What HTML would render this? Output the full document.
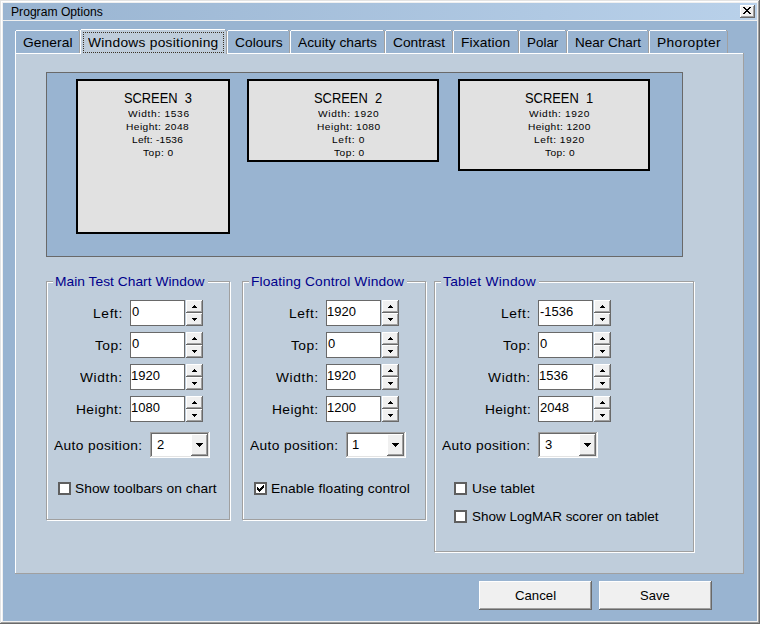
<!DOCTYPE html>
<html lang="en"><head><meta charset="utf-8"><title>Program Options</title>
<style>
html,body{margin:0;padding:0;}
body{width:760px;height:624px;overflow:hidden;position:relative;background:#99B4D1;font-family:"Liberation Sans",sans-serif;}
#w{position:absolute;left:0;top:0;width:760px;height:624px;overflow:hidden;}
#w div,#w svg,#w span{position:absolute;box-sizing:content-box;}
#w svg{display:block;fill:#000;}
.t{white-space:pre;line-height:20px;height:20px;transform-origin:0 0;}
</style></head>
<body><div id="w">
<div class="window-frame" style="left:0;top:0;width:0;height:0">
<div style="left:0px;top:0px;width:760px;height:624px;background:#696969;"></div>
<div style="left:0px;top:0px;width:759px;height:623px;background:#E3E3E3;"></div>
<div style="left:1px;top:1px;width:758px;height:622px;background:#A0A0A0;"></div>
<div style="left:1px;top:1px;width:757px;height:621px;background:#FFFFFF;"></div>
<div style="left:2px;top:2px;width:756px;height:620px;background:#F0F0F0;"></div>
<div style="left:3px;top:3px;width:754px;height:618px;background:#99B4D1;"></div>
</div>
<div class="titlebar" style="left:0;top:0;width:0;height:0">
<div style="left:3px;top:3px;width:754px;height:17px;background:linear-gradient(to right,#99B4D1,#B9D1EA);"></div>
<div style="left:3px;top:20px;width:754px;height:1px;background:#F0F0F0;"></div>
<div style="left:740px;top:5px;width:15px;height:13px;background:#696969;"></div><div style="left:740px;top:5px;width:14px;height:12px;background:#FFFFFF;"></div><div style="left:741px;top:6px;width:13px;height:11px;background:#A0A0A0;"></div><div style="left:741px;top:6px;width:12px;height:10px;background:#F0F0F0;"></div><svg style="left:743px;top:7px" width="8" height="7" viewBox="0 0 8 7" shape-rendering="crispEdges"><rect x="0" y="0" width="2" height="1"/><rect x="6" y="0" width="2" height="1"/><rect x="1" y="1" width="2" height="1"/><rect x="5" y="1" width="2" height="1"/><rect x="2" y="2" width="2" height="1"/><rect x="4" y="2" width="2" height="1"/><rect x="3" y="3" width="2" height="1"/><rect x="3" y="3" width="2" height="1"/><rect x="4" y="4" width="2" height="1"/><rect x="2" y="4" width="2" height="1"/><rect x="5" y="5" width="2" height="1"/><rect x="1" y="5" width="2" height="1"/><rect x="6" y="6" width="2" height="1"/><rect x="0" y="6" width="2" height="1"/></svg>
</div>
<div class="tabpage" style="left:0;top:0;width:0;height:0">
<div style="left:15px;top:53px;width:729px;height:521px;background:#A0A0A0;"></div>
<div style="left:15px;top:53px;width:728px;height:520px;background:#FFFFFF;"></div>
<div style="left:16px;top:54px;width:727px;height:519px;background:#BFCDDB;"></div>
</div>
<div class="tabstrip" style="left:0;top:0;width:0;height:0">
<div style="left:15px;top:31px;width:1px;height:22px;background:#FFFFFF;"></div>
<div style="left:16px;top:30px;width:62px;height:1px;background:#FFFFFF;"></div>
<div style="left:78px;top:30px;width:1px;height:1px;background:#A0A0A0;"></div>
<div style="left:79px;top:31px;width:1px;height:22px;background:#A0A0A0;"></div>
<div style="left:227px;top:31px;width:1px;height:22px;background:#FFFFFF;"></div>
<div style="left:228px;top:30px;width:60px;height:1px;background:#FFFFFF;"></div>
<div style="left:288px;top:30px;width:1px;height:1px;background:#A0A0A0;"></div>
<div style="left:289px;top:31px;width:1px;height:22px;background:#A0A0A0;"></div>
<div style="left:290px;top:31px;width:1px;height:22px;background:#FFFFFF;"></div>
<div style="left:291px;top:30px;width:92px;height:1px;background:#FFFFFF;"></div>
<div style="left:383px;top:30px;width:1px;height:1px;background:#A0A0A0;"></div>
<div style="left:384px;top:31px;width:1px;height:22px;background:#A0A0A0;"></div>
<div style="left:385px;top:31px;width:1px;height:22px;background:#FFFFFF;"></div>
<div style="left:386px;top:30px;width:65px;height:1px;background:#FFFFFF;"></div>
<div style="left:451px;top:30px;width:1px;height:1px;background:#A0A0A0;"></div>
<div style="left:452px;top:31px;width:1px;height:22px;background:#A0A0A0;"></div>
<div style="left:453px;top:31px;width:1px;height:22px;background:#FFFFFF;"></div>
<div style="left:454px;top:30px;width:63px;height:1px;background:#FFFFFF;"></div>
<div style="left:517px;top:30px;width:1px;height:1px;background:#A0A0A0;"></div>
<div style="left:518px;top:31px;width:1px;height:22px;background:#A0A0A0;"></div>
<div style="left:519px;top:31px;width:1px;height:22px;background:#FFFFFF;"></div>
<div style="left:520px;top:30px;width:45px;height:1px;background:#FFFFFF;"></div>
<div style="left:565px;top:30px;width:1px;height:1px;background:#A0A0A0;"></div>
<div style="left:566px;top:31px;width:1px;height:22px;background:#A0A0A0;"></div>
<div style="left:567px;top:31px;width:1px;height:22px;background:#FFFFFF;"></div>
<div style="left:568px;top:30px;width:79px;height:1px;background:#FFFFFF;"></div>
<div style="left:647px;top:30px;width:1px;height:1px;background:#A0A0A0;"></div>
<div style="left:648px;top:31px;width:1px;height:22px;background:#A0A0A0;"></div>
<div style="left:649px;top:31px;width:1px;height:22px;background:#FFFFFF;"></div>
<div style="left:650px;top:30px;width:76px;height:1px;background:#FFFFFF;"></div>
<div style="left:726px;top:30px;width:1px;height:1px;background:#A0A0A0;"></div>
<div style="left:727px;top:31px;width:1px;height:22px;background:#A0A0A0;"></div>
<div style="left:80px;top:30px;width:1px;height:24px;background:#FFFFFF;"></div>
<div style="left:81px;top:29px;width:144px;height:1px;background:#FFFFFF;"></div>
<div style="left:81px;top:30px;width:145px;height:24px;background:#BFCDDB;"></div>
<div style="left:226px;top:31px;width:1px;height:23px;background:#A0A0A0;"></div>
<div style="left:225px;top:30px;width:1px;height:1px;background:#A0A0A0;"></div>
<div style="left:83px;top:32px;width:141px;height:21px;background:repeating-linear-gradient(to right,#3A3226 0 1px,transparent 1px 2px) 0 0/100% 1px no-repeat,repeating-linear-gradient(to right,#3A3226 0 1px,transparent 1px 2px) 0 100%/100% 1px no-repeat,repeating-linear-gradient(to bottom,#3A3226 0 1px,transparent 1px 2px) 0 0/1px 100% no-repeat,repeating-linear-gradient(to bottom,#3A3226 0 1px,transparent 1px 2px) 100% 0/1px 100% no-repeat;"></div>
</div>
<div class="screens-panel" style="left:0;top:0;width:0;height:0">
<div style="left:46px;top:72px;width:637px;height:185px;background:#696969;"></div>
<div style="left:47px;top:73px;width:635px;height:183px;background:#99B4D1;"></div>
<div style="left:76px;top:79px;width:154px;height:155px;background:#000;"></div>
<div style="left:78px;top:81px;width:150px;height:151px;background:#E1E1E1;"></div>
<div style="left:247px;top:79px;width:192px;height:83px;background:#000;"></div>
<div style="left:249px;top:81px;width:188px;height:79px;background:#E1E1E1;"></div>
<div style="left:458px;top:79px;width:192px;height:92px;background:#000;"></div>
<div style="left:460px;top:81px;width:188px;height:88px;background:#E1E1E1;"></div>
</div>
<div class="groupboxes" style="left:0;top:0;width:0;height:0">
<div style="left:47px;top:282px;width:182px;height:237px;border:1px solid #FFFFFF;"></div><div style="left:46px;top:281px;width:182px;height:237px;border:1px solid #A0A0A0;"></div><div style="left:53px;top:281px;width:155px;height:2px;background:#BFCDDB;"></div>
<div style="left:243px;top:282px;width:182px;height:237px;border:1px solid #FFFFFF;"></div><div style="left:242px;top:281px;width:182px;height:237px;border:1px solid #A0A0A0;"></div><div style="left:249px;top:281px;width:158px;height:2px;background:#BFCDDB;"></div>
<div style="left:435px;top:282px;width:258px;height:269px;border:1px solid #FFFFFF;"></div><div style="left:434px;top:281px;width:258px;height:269px;border:1px solid #A0A0A0;"></div><div style="left:441px;top:281px;width:98px;height:2px;background:#BFCDDB;"></div>
</div>
<div class="spin-edits" style="left:0;top:0;width:0;height:0">
<div style="left:130px;top:300px;width:55px;height:26px;background:#696969;"></div><div style="left:131px;top:301px;width:53px;height:24px;background:#FFF;"></div><div style="left:186px;top:300px;width:17px;height:13px;background:#696969;"></div><div style="left:186px;top:300px;width:16px;height:12px;background:#FFFFFF;"></div><div style="left:187px;top:301px;width:15px;height:11px;background:#A0A0A0;"></div><div style="left:187px;top:301px;width:14px;height:10px;background:#F0F0F0;"></div><svg style="left:192px;top:305px" width="5" height="3" viewBox="0 0 5 3" shape-rendering="crispEdges"><rect x="2" y="0" width="1" height="1"/><rect x="1" y="1" width="3" height="1"/><rect x="0" y="2" width="5" height="1"/></svg><div style="left:186px;top:313px;width:17px;height:13px;background:#696969;"></div><div style="left:186px;top:313px;width:16px;height:12px;background:#FFFFFF;"></div><div style="left:187px;top:314px;width:15px;height:11px;background:#A0A0A0;"></div><div style="left:187px;top:314px;width:14px;height:10px;background:#F0F0F0;"></div><svg style="left:192px;top:318px" width="5" height="3" viewBox="0 0 5 3" shape-rendering="crispEdges"><rect x="0" y="0" width="5" height="1"/><rect x="1" y="1" width="3" height="1"/><rect x="2" y="2" width="1" height="1"/></svg>
<div style="left:130px;top:332px;width:55px;height:26px;background:#696969;"></div><div style="left:131px;top:333px;width:53px;height:24px;background:#FFF;"></div><div style="left:186px;top:332px;width:17px;height:13px;background:#696969;"></div><div style="left:186px;top:332px;width:16px;height:12px;background:#FFFFFF;"></div><div style="left:187px;top:333px;width:15px;height:11px;background:#A0A0A0;"></div><div style="left:187px;top:333px;width:14px;height:10px;background:#F0F0F0;"></div><svg style="left:192px;top:337px" width="5" height="3" viewBox="0 0 5 3" shape-rendering="crispEdges"><rect x="2" y="0" width="1" height="1"/><rect x="1" y="1" width="3" height="1"/><rect x="0" y="2" width="5" height="1"/></svg><div style="left:186px;top:345px;width:17px;height:13px;background:#696969;"></div><div style="left:186px;top:345px;width:16px;height:12px;background:#FFFFFF;"></div><div style="left:187px;top:346px;width:15px;height:11px;background:#A0A0A0;"></div><div style="left:187px;top:346px;width:14px;height:10px;background:#F0F0F0;"></div><svg style="left:192px;top:350px" width="5" height="3" viewBox="0 0 5 3" shape-rendering="crispEdges"><rect x="0" y="0" width="5" height="1"/><rect x="1" y="1" width="3" height="1"/><rect x="2" y="2" width="1" height="1"/></svg>
<div style="left:130px;top:364px;width:55px;height:26px;background:#696969;"></div><div style="left:131px;top:365px;width:53px;height:24px;background:#FFF;"></div><div style="left:186px;top:364px;width:17px;height:13px;background:#696969;"></div><div style="left:186px;top:364px;width:16px;height:12px;background:#FFFFFF;"></div><div style="left:187px;top:365px;width:15px;height:11px;background:#A0A0A0;"></div><div style="left:187px;top:365px;width:14px;height:10px;background:#F0F0F0;"></div><svg style="left:192px;top:369px" width="5" height="3" viewBox="0 0 5 3" shape-rendering="crispEdges"><rect x="2" y="0" width="1" height="1"/><rect x="1" y="1" width="3" height="1"/><rect x="0" y="2" width="5" height="1"/></svg><div style="left:186px;top:377px;width:17px;height:13px;background:#696969;"></div><div style="left:186px;top:377px;width:16px;height:12px;background:#FFFFFF;"></div><div style="left:187px;top:378px;width:15px;height:11px;background:#A0A0A0;"></div><div style="left:187px;top:378px;width:14px;height:10px;background:#F0F0F0;"></div><svg style="left:192px;top:382px" width="5" height="3" viewBox="0 0 5 3" shape-rendering="crispEdges"><rect x="0" y="0" width="5" height="1"/><rect x="1" y="1" width="3" height="1"/><rect x="2" y="2" width="1" height="1"/></svg>
<div style="left:130px;top:396px;width:55px;height:26px;background:#696969;"></div><div style="left:131px;top:397px;width:53px;height:24px;background:#FFF;"></div><div style="left:186px;top:396px;width:17px;height:13px;background:#696969;"></div><div style="left:186px;top:396px;width:16px;height:12px;background:#FFFFFF;"></div><div style="left:187px;top:397px;width:15px;height:11px;background:#A0A0A0;"></div><div style="left:187px;top:397px;width:14px;height:10px;background:#F0F0F0;"></div><svg style="left:192px;top:401px" width="5" height="3" viewBox="0 0 5 3" shape-rendering="crispEdges"><rect x="2" y="0" width="1" height="1"/><rect x="1" y="1" width="3" height="1"/><rect x="0" y="2" width="5" height="1"/></svg><div style="left:186px;top:409px;width:17px;height:13px;background:#696969;"></div><div style="left:186px;top:409px;width:16px;height:12px;background:#FFFFFF;"></div><div style="left:187px;top:410px;width:15px;height:11px;background:#A0A0A0;"></div><div style="left:187px;top:410px;width:14px;height:10px;background:#F0F0F0;"></div><svg style="left:192px;top:414px" width="5" height="3" viewBox="0 0 5 3" shape-rendering="crispEdges"><rect x="0" y="0" width="5" height="1"/><rect x="1" y="1" width="3" height="1"/><rect x="2" y="2" width="1" height="1"/></svg>
<div style="left:326px;top:300px;width:55px;height:26px;background:#696969;"></div><div style="left:327px;top:301px;width:53px;height:24px;background:#FFF;"></div><div style="left:382px;top:300px;width:17px;height:13px;background:#696969;"></div><div style="left:382px;top:300px;width:16px;height:12px;background:#FFFFFF;"></div><div style="left:383px;top:301px;width:15px;height:11px;background:#A0A0A0;"></div><div style="left:383px;top:301px;width:14px;height:10px;background:#F0F0F0;"></div><svg style="left:388px;top:305px" width="5" height="3" viewBox="0 0 5 3" shape-rendering="crispEdges"><rect x="2" y="0" width="1" height="1"/><rect x="1" y="1" width="3" height="1"/><rect x="0" y="2" width="5" height="1"/></svg><div style="left:382px;top:313px;width:17px;height:13px;background:#696969;"></div><div style="left:382px;top:313px;width:16px;height:12px;background:#FFFFFF;"></div><div style="left:383px;top:314px;width:15px;height:11px;background:#A0A0A0;"></div><div style="left:383px;top:314px;width:14px;height:10px;background:#F0F0F0;"></div><svg style="left:388px;top:318px" width="5" height="3" viewBox="0 0 5 3" shape-rendering="crispEdges"><rect x="0" y="0" width="5" height="1"/><rect x="1" y="1" width="3" height="1"/><rect x="2" y="2" width="1" height="1"/></svg>
<div style="left:326px;top:332px;width:55px;height:26px;background:#696969;"></div><div style="left:327px;top:333px;width:53px;height:24px;background:#FFF;"></div><div style="left:382px;top:332px;width:17px;height:13px;background:#696969;"></div><div style="left:382px;top:332px;width:16px;height:12px;background:#FFFFFF;"></div><div style="left:383px;top:333px;width:15px;height:11px;background:#A0A0A0;"></div><div style="left:383px;top:333px;width:14px;height:10px;background:#F0F0F0;"></div><svg style="left:388px;top:337px" width="5" height="3" viewBox="0 0 5 3" shape-rendering="crispEdges"><rect x="2" y="0" width="1" height="1"/><rect x="1" y="1" width="3" height="1"/><rect x="0" y="2" width="5" height="1"/></svg><div style="left:382px;top:345px;width:17px;height:13px;background:#696969;"></div><div style="left:382px;top:345px;width:16px;height:12px;background:#FFFFFF;"></div><div style="left:383px;top:346px;width:15px;height:11px;background:#A0A0A0;"></div><div style="left:383px;top:346px;width:14px;height:10px;background:#F0F0F0;"></div><svg style="left:388px;top:350px" width="5" height="3" viewBox="0 0 5 3" shape-rendering="crispEdges"><rect x="0" y="0" width="5" height="1"/><rect x="1" y="1" width="3" height="1"/><rect x="2" y="2" width="1" height="1"/></svg>
<div style="left:326px;top:364px;width:55px;height:26px;background:#696969;"></div><div style="left:327px;top:365px;width:53px;height:24px;background:#FFF;"></div><div style="left:382px;top:364px;width:17px;height:13px;background:#696969;"></div><div style="left:382px;top:364px;width:16px;height:12px;background:#FFFFFF;"></div><div style="left:383px;top:365px;width:15px;height:11px;background:#A0A0A0;"></div><div style="left:383px;top:365px;width:14px;height:10px;background:#F0F0F0;"></div><svg style="left:388px;top:369px" width="5" height="3" viewBox="0 0 5 3" shape-rendering="crispEdges"><rect x="2" y="0" width="1" height="1"/><rect x="1" y="1" width="3" height="1"/><rect x="0" y="2" width="5" height="1"/></svg><div style="left:382px;top:377px;width:17px;height:13px;background:#696969;"></div><div style="left:382px;top:377px;width:16px;height:12px;background:#FFFFFF;"></div><div style="left:383px;top:378px;width:15px;height:11px;background:#A0A0A0;"></div><div style="left:383px;top:378px;width:14px;height:10px;background:#F0F0F0;"></div><svg style="left:388px;top:382px" width="5" height="3" viewBox="0 0 5 3" shape-rendering="crispEdges"><rect x="0" y="0" width="5" height="1"/><rect x="1" y="1" width="3" height="1"/><rect x="2" y="2" width="1" height="1"/></svg>
<div style="left:326px;top:396px;width:55px;height:26px;background:#696969;"></div><div style="left:327px;top:397px;width:53px;height:24px;background:#FFF;"></div><div style="left:382px;top:396px;width:17px;height:13px;background:#696969;"></div><div style="left:382px;top:396px;width:16px;height:12px;background:#FFFFFF;"></div><div style="left:383px;top:397px;width:15px;height:11px;background:#A0A0A0;"></div><div style="left:383px;top:397px;width:14px;height:10px;background:#F0F0F0;"></div><svg style="left:388px;top:401px" width="5" height="3" viewBox="0 0 5 3" shape-rendering="crispEdges"><rect x="2" y="0" width="1" height="1"/><rect x="1" y="1" width="3" height="1"/><rect x="0" y="2" width="5" height="1"/></svg><div style="left:382px;top:409px;width:17px;height:13px;background:#696969;"></div><div style="left:382px;top:409px;width:16px;height:12px;background:#FFFFFF;"></div><div style="left:383px;top:410px;width:15px;height:11px;background:#A0A0A0;"></div><div style="left:383px;top:410px;width:14px;height:10px;background:#F0F0F0;"></div><svg style="left:388px;top:414px" width="5" height="3" viewBox="0 0 5 3" shape-rendering="crispEdges"><rect x="0" y="0" width="5" height="1"/><rect x="1" y="1" width="3" height="1"/><rect x="2" y="2" width="1" height="1"/></svg>
<div style="left:538px;top:300px;width:55px;height:26px;background:#696969;"></div><div style="left:539px;top:301px;width:53px;height:24px;background:#FFF;"></div><div style="left:594px;top:300px;width:17px;height:13px;background:#696969;"></div><div style="left:594px;top:300px;width:16px;height:12px;background:#FFFFFF;"></div><div style="left:595px;top:301px;width:15px;height:11px;background:#A0A0A0;"></div><div style="left:595px;top:301px;width:14px;height:10px;background:#F0F0F0;"></div><svg style="left:600px;top:305px" width="5" height="3" viewBox="0 0 5 3" shape-rendering="crispEdges"><rect x="2" y="0" width="1" height="1"/><rect x="1" y="1" width="3" height="1"/><rect x="0" y="2" width="5" height="1"/></svg><div style="left:594px;top:313px;width:17px;height:13px;background:#696969;"></div><div style="left:594px;top:313px;width:16px;height:12px;background:#FFFFFF;"></div><div style="left:595px;top:314px;width:15px;height:11px;background:#A0A0A0;"></div><div style="left:595px;top:314px;width:14px;height:10px;background:#F0F0F0;"></div><svg style="left:600px;top:318px" width="5" height="3" viewBox="0 0 5 3" shape-rendering="crispEdges"><rect x="0" y="0" width="5" height="1"/><rect x="1" y="1" width="3" height="1"/><rect x="2" y="2" width="1" height="1"/></svg>
<div style="left:538px;top:332px;width:55px;height:26px;background:#696969;"></div><div style="left:539px;top:333px;width:53px;height:24px;background:#FFF;"></div><div style="left:594px;top:332px;width:17px;height:13px;background:#696969;"></div><div style="left:594px;top:332px;width:16px;height:12px;background:#FFFFFF;"></div><div style="left:595px;top:333px;width:15px;height:11px;background:#A0A0A0;"></div><div style="left:595px;top:333px;width:14px;height:10px;background:#F0F0F0;"></div><svg style="left:600px;top:337px" width="5" height="3" viewBox="0 0 5 3" shape-rendering="crispEdges"><rect x="2" y="0" width="1" height="1"/><rect x="1" y="1" width="3" height="1"/><rect x="0" y="2" width="5" height="1"/></svg><div style="left:594px;top:345px;width:17px;height:13px;background:#696969;"></div><div style="left:594px;top:345px;width:16px;height:12px;background:#FFFFFF;"></div><div style="left:595px;top:346px;width:15px;height:11px;background:#A0A0A0;"></div><div style="left:595px;top:346px;width:14px;height:10px;background:#F0F0F0;"></div><svg style="left:600px;top:350px" width="5" height="3" viewBox="0 0 5 3" shape-rendering="crispEdges"><rect x="0" y="0" width="5" height="1"/><rect x="1" y="1" width="3" height="1"/><rect x="2" y="2" width="1" height="1"/></svg>
<div style="left:538px;top:364px;width:55px;height:26px;background:#696969;"></div><div style="left:539px;top:365px;width:53px;height:24px;background:#FFF;"></div><div style="left:594px;top:364px;width:17px;height:13px;background:#696969;"></div><div style="left:594px;top:364px;width:16px;height:12px;background:#FFFFFF;"></div><div style="left:595px;top:365px;width:15px;height:11px;background:#A0A0A0;"></div><div style="left:595px;top:365px;width:14px;height:10px;background:#F0F0F0;"></div><svg style="left:600px;top:369px" width="5" height="3" viewBox="0 0 5 3" shape-rendering="crispEdges"><rect x="2" y="0" width="1" height="1"/><rect x="1" y="1" width="3" height="1"/><rect x="0" y="2" width="5" height="1"/></svg><div style="left:594px;top:377px;width:17px;height:13px;background:#696969;"></div><div style="left:594px;top:377px;width:16px;height:12px;background:#FFFFFF;"></div><div style="left:595px;top:378px;width:15px;height:11px;background:#A0A0A0;"></div><div style="left:595px;top:378px;width:14px;height:10px;background:#F0F0F0;"></div><svg style="left:600px;top:382px" width="5" height="3" viewBox="0 0 5 3" shape-rendering="crispEdges"><rect x="0" y="0" width="5" height="1"/><rect x="1" y="1" width="3" height="1"/><rect x="2" y="2" width="1" height="1"/></svg>
<div style="left:538px;top:396px;width:55px;height:26px;background:#696969;"></div><div style="left:539px;top:397px;width:53px;height:24px;background:#FFF;"></div><div style="left:594px;top:396px;width:17px;height:13px;background:#696969;"></div><div style="left:594px;top:396px;width:16px;height:12px;background:#FFFFFF;"></div><div style="left:595px;top:397px;width:15px;height:11px;background:#A0A0A0;"></div><div style="left:595px;top:397px;width:14px;height:10px;background:#F0F0F0;"></div><svg style="left:600px;top:401px" width="5" height="3" viewBox="0 0 5 3" shape-rendering="crispEdges"><rect x="2" y="0" width="1" height="1"/><rect x="1" y="1" width="3" height="1"/><rect x="0" y="2" width="5" height="1"/></svg><div style="left:594px;top:409px;width:17px;height:13px;background:#696969;"></div><div style="left:594px;top:409px;width:16px;height:12px;background:#FFFFFF;"></div><div style="left:595px;top:410px;width:15px;height:11px;background:#A0A0A0;"></div><div style="left:595px;top:410px;width:14px;height:10px;background:#F0F0F0;"></div><svg style="left:600px;top:414px" width="5" height="3" viewBox="0 0 5 3" shape-rendering="crispEdges"><rect x="0" y="0" width="5" height="1"/><rect x="1" y="1" width="3" height="1"/><rect x="2" y="2" width="1" height="1"/></svg>
</div>
<div class="combos" style="left:0;top:0;width:0;height:0">
<div style="left:150px;top:432px;width:60px;height:26px;background:#FFFFFF;"></div><div style="left:150px;top:432px;width:59px;height:25px;background:#A0A0A0;"></div><div style="left:151px;top:433px;width:58px;height:24px;background:#E3E3E3;"></div><div style="left:151px;top:433px;width:57px;height:23px;background:#696969;"></div><div style="left:152px;top:434px;width:56px;height:22px;background:#FFF;"></div><div style="left:191px;top:434px;width:17px;height:22px;background:#696969;"></div><div style="left:191px;top:434px;width:16px;height:21px;background:#FFFFFF;"></div><div style="left:192px;top:435px;width:15px;height:20px;background:#A0A0A0;"></div><div style="left:192px;top:435px;width:14px;height:19px;background:#F0F0F0;"></div><svg style="left:196px;top:443px" width="7" height="4" viewBox="0 0 7 4" shape-rendering="crispEdges"><rect x="0" y="0" width="7" height="1"/><rect x="1" y="1" width="5" height="1"/><rect x="2" y="2" width="3" height="1"/><rect x="3" y="3" width="1" height="1"/></svg>
<div style="left:346px;top:432px;width:60px;height:26px;background:#FFFFFF;"></div><div style="left:346px;top:432px;width:59px;height:25px;background:#A0A0A0;"></div><div style="left:347px;top:433px;width:58px;height:24px;background:#E3E3E3;"></div><div style="left:347px;top:433px;width:57px;height:23px;background:#696969;"></div><div style="left:348px;top:434px;width:56px;height:22px;background:#FFF;"></div><div style="left:387px;top:434px;width:17px;height:22px;background:#696969;"></div><div style="left:387px;top:434px;width:16px;height:21px;background:#FFFFFF;"></div><div style="left:388px;top:435px;width:15px;height:20px;background:#A0A0A0;"></div><div style="left:388px;top:435px;width:14px;height:19px;background:#F0F0F0;"></div><svg style="left:392px;top:443px" width="7" height="4" viewBox="0 0 7 4" shape-rendering="crispEdges"><rect x="0" y="0" width="7" height="1"/><rect x="1" y="1" width="5" height="1"/><rect x="2" y="2" width="3" height="1"/><rect x="3" y="3" width="1" height="1"/></svg>
<div style="left:538px;top:432px;width:60px;height:26px;background:#FFFFFF;"></div><div style="left:538px;top:432px;width:59px;height:25px;background:#A0A0A0;"></div><div style="left:539px;top:433px;width:58px;height:24px;background:#E3E3E3;"></div><div style="left:539px;top:433px;width:57px;height:23px;background:#696969;"></div><div style="left:540px;top:434px;width:56px;height:22px;background:#FFF;"></div><div style="left:579px;top:434px;width:17px;height:22px;background:#696969;"></div><div style="left:579px;top:434px;width:16px;height:21px;background:#FFFFFF;"></div><div style="left:580px;top:435px;width:15px;height:20px;background:#A0A0A0;"></div><div style="left:580px;top:435px;width:14px;height:19px;background:#F0F0F0;"></div><svg style="left:584px;top:443px" width="7" height="4" viewBox="0 0 7 4" shape-rendering="crispEdges"><rect x="0" y="0" width="7" height="1"/><rect x="1" y="1" width="5" height="1"/><rect x="2" y="2" width="3" height="1"/><rect x="3" y="3" width="1" height="1"/></svg>
</div>
<div class="checkboxes" style="left:0;top:0;width:0;height:0">
<div style="left:58px;top:482px;width:13px;height:13px;background:#5F5F5F;"></div><div style="left:60px;top:484px;width:9px;height:9px;background:#FFF;"></div>
<div style="left:254px;top:482px;width:13px;height:13px;background:#5F5F5F;"></div><div style="left:256px;top:484px;width:9px;height:9px;background:#FFF;"></div><svg style="left:257px;top:485px" width="7" height="7" viewBox="0 0 7 7" shape-rendering="crispEdges"><rect x="0" y="2" width="1" height="3"/><rect x="1" y="3" width="1" height="3"/><rect x="2" y="4" width="1" height="3"/><rect x="3" y="3" width="1" height="3"/><rect x="4" y="2" width="1" height="3"/><rect x="5" y="1" width="1" height="3"/><rect x="6" y="0" width="1" height="3"/></svg>
<div style="left:454px;top:482px;width:13px;height:13px;background:#5F5F5F;"></div><div style="left:456px;top:484px;width:9px;height:9px;background:#FFF;"></div>
<div style="left:454px;top:510px;width:13px;height:13px;background:#5F5F5F;"></div><div style="left:456px;top:512px;width:9px;height:9px;background:#FFF;"></div>
</div>
<div class="buttons" style="left:0;top:0;width:0;height:0">
<div style="left:479px;top:581px;width:113px;height:29px;background:#696969;"></div><div style="left:479px;top:581px;width:112px;height:28px;background:#FFFFFF;"></div><div style="left:480px;top:582px;width:111px;height:27px;background:#A0A0A0;"></div><div style="left:480px;top:582px;width:110px;height:26px;background:#F0F0F0;"></div>
<div style="left:599px;top:581px;width:113px;height:29px;background:#696969;"></div><div style="left:599px;top:581px;width:112px;height:28px;background:#FFFFFF;"></div><div style="left:600px;top:582px;width:111px;height:27px;background:#A0A0A0;"></div><div style="left:600px;top:582px;width:110px;height:26px;background:#F0F0F0;"></div>
</div>
<div class="labels" style="left:0;top:0;width:0;height:0">
<span class="t" id="title" style="font-size:12px;color:#000000;left:11.00px;top:2.00px;transform:scaleX(1.0109);">Program Options</span>
<span class="t" id="tab0" style="font-size:13px;color:#000000;left:23.00px;top:33.00px;transform:scaleX(1.0600);letter-spacing:0.066px;">General</span>
<span class="t" id="tab1" style="font-size:13px;color:#000000;left:88.00px;top:33.00px;transform:scaleX(1.0600);letter-spacing:0.241px;">Windows positioning</span>
<span class="t" id="tab2" style="font-size:13px;color:#000000;left:235.00px;top:33.00px;transform:scaleX(1.0600);letter-spacing:0.036px;">Colours</span>
<span class="t" id="tab3" style="font-size:13px;color:#000000;left:298.00px;top:33.00px;transform:scaleX(1.0600);letter-spacing:0.004px;">Acuity charts</span>
<span class="t" id="tab4" style="font-size:13px;color:#000000;left:393.00px;top:33.00px;transform:scaleX(1.0590);">Contrast</span>
<span class="t" id="tab5" style="font-size:13px;color:#000000;left:461.00px;top:33.00px;transform:scaleX(1.0600);letter-spacing:0.120px;">Fixation</span>
<span class="t" id="tab6" style="font-size:13px;color:#000000;left:527.00px;top:33.00px;transform:scaleX(1.0314);">Polar</span>
<span class="t" id="tab7" style="font-size:13px;color:#000000;left:575.00px;top:33.00px;transform:scaleX(1.0393);">Near Chart</span>
<span class="t" id="tab8" style="font-size:13px;color:#000000;left:657.00px;top:33.00px;transform:scaleX(1.0600);letter-spacing:0.354px;">Phoropter</span>
<span class="t" id="s3h" style="font-size:14px;color:#000000;left:124.00px;top:88.00px;transform:scaleX(0.9200);letter-spacing:-0.028px;">SCREEN  3</span>
<span class="t" id="s3l0" style="font-size:9.6px;color:#000000;left:128.00px;top:104.00px;transform:scaleX(1.0600);letter-spacing:0.639px;">Width: 1536</span>
<span class="t" id="s3l1" style="font-size:9.6px;color:#000000;left:126.00px;top:117.00px;transform:scaleX(1.0600);letter-spacing:0.428px;">Height: 2048</span>
<span class="t" id="s3l2" style="font-size:9.6px;color:#000000;left:132.00px;top:130.00px;transform:scaleX(1.0600);letter-spacing:0.208px;">Left: -1536</span>
<span class="t" id="s3l3" style="font-size:9.6px;color:#000000;left:143.00px;top:143.00px;transform:scaleX(1.0600);letter-spacing:0.484px;">Top: 0</span>
<span class="t" id="s2h" style="font-size:14px;color:#000000;left:314.00px;top:88.00px;transform:scaleX(0.9210);">SCREEN  2</span>
<span class="t" id="s2l0" style="font-size:9.6px;color:#000000;left:318.00px;top:104.00px;transform:scaleX(1.0600);letter-spacing:0.600px;">Width: 1920</span>
<span class="t" id="s2l1" style="font-size:9.6px;color:#000000;left:317.00px;top:117.00px;transform:scaleX(1.0600);letter-spacing:0.472px;">Height: 1080</span>
<span class="t" id="s2l2" style="font-size:9.6px;color:#000000;left:332.00px;top:130.00px;transform:scaleX(1.0600);letter-spacing:0.634px;">Left: 0</span>
<span class="t" id="s2l3" style="font-size:9.6px;color:#000000;left:334.00px;top:143.00px;transform:scaleX(1.0600);letter-spacing:0.482px;">Top: 0</span>
<span class="t" id="s1h" style="font-size:14px;color:#000000;left:525.00px;top:88.00px;transform:scaleX(0.9214);">SCREEN  1</span>
<span class="t" id="s1l0" style="font-size:9.6px;color:#000000;left:529.00px;top:104.00px;transform:scaleX(1.0600);letter-spacing:0.587px;">Width: 1920</span>
<span class="t" id="s1l1" style="font-size:9.6px;color:#000000;left:528.00px;top:117.00px;transform:scaleX(1.0600);letter-spacing:0.400px;">Height: 1200</span>
<span class="t" id="s1l2" style="font-size:9.6px;color:#000000;left:534.00px;top:130.00px;transform:scaleX(1.0600);letter-spacing:0.511px;">Left: 1920</span>
<span class="t" id="s1l3" style="font-size:9.6px;color:#000000;left:545.00px;top:143.00px;transform:scaleX(1.0600);letter-spacing:0.360px;">Top: 0</span>
<span class="t" id="g1cap" style="font-size:13px;color:#00008B;left:55.00px;top:272.00px;transform:scaleX(1.0600);letter-spacing:0.020px;">Main Test Chart Window</span>
<span class="t" id="g2cap" style="font-size:13px;color:#00008B;left:251.00px;top:272.00px;transform:scaleX(1.0600);letter-spacing:0.122px;">Floating Control Window</span>
<span class="t" id="g3cap" style="font-size:13px;color:#00008B;left:443.00px;top:272.00px;transform:scaleX(1.0600);letter-spacing:0.244px;">Tablet Window</span>
<span class="t" id="g0l0" style="font-size:13px;color:#000000;left:93.00px;top:304.00px;transform:scaleX(1.0600);letter-spacing:0.614px;">Left:</span>
<span class="t" id="g0v0" style="font-size:13px;color:#000000;left:132.00px;top:302.00px;">0</span>
<span class="t" id="g0l1" style="font-size:13px;color:#000000;left:95.00px;top:336.00px;transform:scaleX(1.0600);letter-spacing:0.417px;">Top:</span>
<span class="t" id="g0v1" style="font-size:13px;color:#000000;left:132.00px;top:334.00px;">0</span>
<span class="t" id="g0l2" style="font-size:13px;color:#000000;left:80.00px;top:368.00px;transform:scaleX(1.0600);letter-spacing:0.576px;">Width:</span>
<span class="t" id="g0v2" style="font-size:13px;color:#000000;left:131.00px;top:366.00px;">1920</span>
<span class="t" id="g0l3" style="font-size:13px;color:#000000;left:76.00px;top:400.00px;transform:scaleX(1.0600);letter-spacing:0.399px;">Height:</span>
<span class="t" id="g0v3" style="font-size:13px;color:#000000;left:131.00px;top:398.00px;">1080</span>
<span class="t" id="g1l0" style="font-size:13px;color:#000000;left:289.00px;top:304.00px;transform:scaleX(1.0600);letter-spacing:0.583px;">Left:</span>
<span class="t" id="g1v0" style="font-size:13px;color:#000000;left:327.00px;top:302.00px;">1920</span>
<span class="t" id="g1l1" style="font-size:13px;color:#000000;left:291.00px;top:336.00px;transform:scaleX(1.0600);letter-spacing:0.417px;">Top:</span>
<span class="t" id="g1v1" style="font-size:13px;color:#000000;left:328.00px;top:334.00px;">0</span>
<span class="t" id="g1l2" style="font-size:13px;color:#000000;left:276.00px;top:368.00px;transform:scaleX(1.0600);letter-spacing:0.576px;">Width:</span>
<span class="t" id="g1v2" style="font-size:13px;color:#000000;left:327.00px;top:366.00px;">1920</span>
<span class="t" id="g1l3" style="font-size:13px;color:#000000;left:272.00px;top:400.00px;transform:scaleX(1.0600);letter-spacing:0.399px;">Height:</span>
<span class="t" id="g1v3" style="font-size:13px;color:#000000;left:327.00px;top:398.00px;">1200</span>
<span class="t" id="g2l0" style="font-size:13px;color:#000000;left:501.00px;top:304.00px;transform:scaleX(1.0600);letter-spacing:0.610px;">Left:</span>
<span class="t" id="g2v0" style="font-size:13px;color:#000000;left:540.00px;top:302.00px;">-1536</span>
<span class="t" id="g2l1" style="font-size:13px;color:#000000;left:503.00px;top:336.00px;transform:scaleX(1.0600);letter-spacing:0.417px;">Top:</span>
<span class="t" id="g2v1" style="font-size:13px;color:#000000;left:540.00px;top:334.00px;">0</span>
<span class="t" id="g2l2" style="font-size:13px;color:#000000;left:488.00px;top:368.00px;transform:scaleX(1.0600);letter-spacing:0.589px;">Width:</span>
<span class="t" id="g2v2" style="font-size:13px;color:#000000;left:539.00px;top:366.00px;">1536</span>
<span class="t" id="g2l3" style="font-size:13px;color:#000000;left:485.00px;top:400.00px;transform:scaleX(1.0600);letter-spacing:0.326px;">Height:</span>
<span class="t" id="g2v3" style="font-size:13px;color:#000000;left:540.00px;top:398.00px;">2048</span>
<span class="t" id="g0auto" style="font-size:13px;color:#000000;left:54.00px;top:436.00px;transform:scaleX(1.0600);letter-spacing:0.332px;">Auto position:</span>
<span class="t" id="g0cv" style="font-size:13px;color:#000000;left:157.00px;top:435.00px;">2</span>
<span class="t" id="g1auto" style="font-size:13px;color:#000000;left:250.00px;top:436.00px;transform:scaleX(1.0600);letter-spacing:0.332px;">Auto position:</span>
<span class="t" id="g1cv" style="font-size:13px;color:#000000;left:352.00px;top:435.00px;">1</span>
<span class="t" id="g2auto" style="font-size:13px;color:#000000;left:442.00px;top:436.00px;transform:scaleX(1.0600);letter-spacing:0.332px;">Auto position:</span>
<span class="t" id="g2cv" style="font-size:13px;color:#000000;left:545.00px;top:435.00px;">3</span>
<span class="t" id="ck1" style="font-size:13px;color:#000000;left:75.00px;top:479.00px;transform:scaleX(1.0600);letter-spacing:0.030px;">Show toolbars on chart</span>
<span class="t" id="ck2" style="font-size:13px;color:#000000;left:271.00px;top:479.00px;transform:scaleX(1.0600);letter-spacing:0.104px;">Enable floating control</span>
<span class="t" id="ck3" style="font-size:13px;color:#000000;left:472.00px;top:479.00px;transform:scaleX(1.0600);letter-spacing:0.058px;">Use tablet</span>
<span class="t" id="ck4" style="font-size:13px;color:#000000;left:472.00px;top:507.00px;transform:scaleX(1.0367);">Show LogMAR scorer on tablet</span>
<span class="t" id="bcancel" style="font-size:13px;color:#000000;left:515.00px;top:586.00px;transform:scaleX(1.0146);">Cancel</span>
<span class="t" id="bsave" style="font-size:13px;color:#000000;left:640.00px;top:586.00px;">Save</span>
</div>
</div></body></html>
